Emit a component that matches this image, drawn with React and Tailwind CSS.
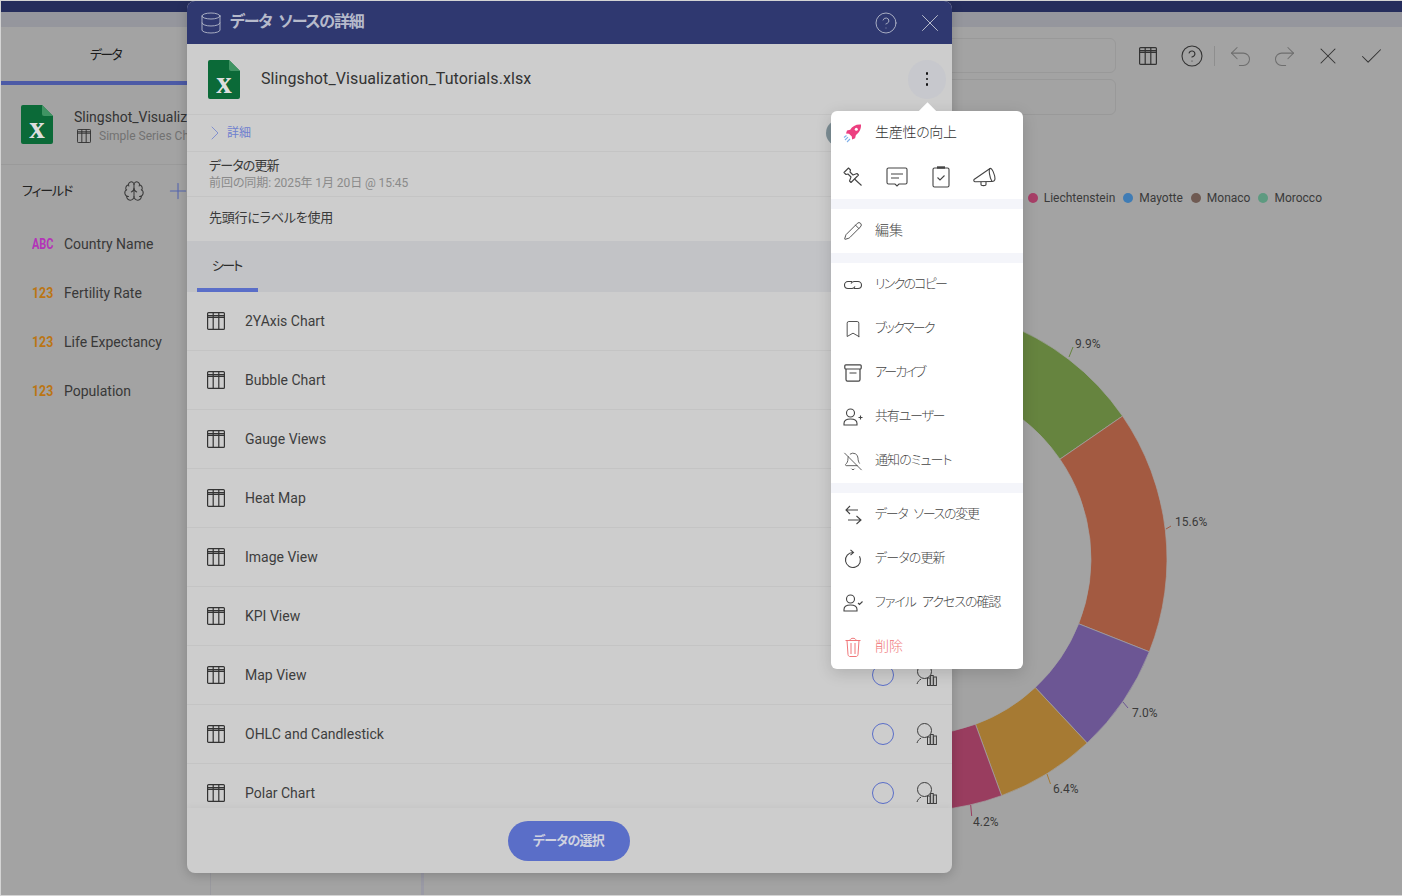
import React from "react";
import { Brain, Plus, ChevronRight, Database, X, Check, Undo2, Redo2, CircleHelp, Pencil, Bookmark, BellOff } from "lucide-react";

function TableIcon({ className = "" }) {
  return (
    <svg viewBox="0 0 18 18" className={className} fill="none" stroke="currentColor" strokeWidth="1.2">
      <rect x="0.6" y="0.6" width="16.8" height="16.8" rx="1" />
      <path d="M0.6 3.6H17.4M0.6 5.4H17.4M6.2 0.6V17.4M11.8 0.6V17.4" />
    </svg>
  );
}

function ExcelIcon({ className = "" }) {
  return (
    <svg viewBox="0 0 32 39" className={className}>
      <path d="M2 0H21L32 11V37a2 2 0 0 1-2 2H2a2 2 0 0 1-2-2V2a2 2 0 0 1 2-2Z" fill="#0b6a38" />
      <path d="M21 0L32 11H23a2 2 0 0 1-2-2Z" fill="#3f9463" />
      <text x="16" y="32.500" textAnchor="middle" fontFamily="'Liberation Serif',serif" fontWeight="700" fontSize="31" fill="#dedede">x</text>
    </svg>
  );
}

function SearchChart() {
  return (
    <svg viewBox="0 0 22 22" className="w-[22px] h-[22px] text-[#3d3d3d]" fill="none" stroke="currentColor" strokeWidth="1">
      <circle cx="8.5" cy="7.5" r="7" />
      <path d="M1 20c.6-2.2 2-3.8 4-4.8M12 15.5l1.5.8" />
      <rect x="11.5" y="14" width="2.6" height="7.5" fill="#cdcdcd" />
      <rect x="14.6" y="11.5" width="2.6" height="10" fill="#cdcdcd" />
      <rect x="17.6" y="13" width="2.8" height="8.5" fill="#cdcdcd" />
    </svg>
  );
}

const sheets = ["2YAxis Chart", "Bubble Chart", "Gauge Views", "Heat Map", "Image View", "KPI View", "Map View", "OHLC and Candlestick", "Polar Chart"];
const fields = [
  ["ABC", "Country Name", "text-[#b334b8] scale-x-[0.78]"],
  ["123", "Fertility Rate", "text-[#bb7514] scale-x-[0.88]"],
  ["123", "Life Expectancy", "text-[#bb7514] scale-x-[0.88]"],
  ["123", "Population", "text-[#bb7514] scale-x-[0.88]"],
];
const legend = [
  ["Liechtenstein", "bg-[#a83f68]"],
  ["Mayotte", "bg-[#3f7cb5]"],
  ["Monaco", "bg-[#6f5a52]"],
  ["Morocco", "bg-[#5d9a80]"],
];

const CX = 915, CY = 559, R1 = 252, R0 = 176;
function pt(r, a) {
  const t = (a * Math.PI) / 180;
  return [CX + r * Math.sin(t), CY - r * Math.cos(t)];
}
function wedge(a, b) {
  const [x1, y1] = pt(R1, a), [x2, y2] = pt(R1, b), [x3, y3] = pt(R0, b), [x4, y4] = pt(R0, a);
  return `M${x1} ${y1}A${R1} ${R1} 0 0 1 ${x2} ${y2}L${x3} ${y3}A${R0} ${R0} 0 0 0 ${x4} ${y4}Z`;
}
const wedges = [
  [19.8, 55.45, "#66843f"],
  [55.45, 111.6, "#a35a41"],
  [111.6, 136.9, "#6c5694"],
  [136.9, 159.9, "#a67a33"],
  [159.9, 175, "#993d5f"],
];
const labels = [
  ["9.9%", 1075, 348, "#66843f", "M1069 357L1073 347"],
  ["15.6%", 1175, 526, "#a35a41", "M1166 529L1171 526"],
  ["7.0%", 1132, 717, "#6c5694", "M1123 702L1128 708"],
  ["6.4%", 1053, 793, "#a67a33", "M1047 774L1050.5 784"],
  ["4.2%", 973, 826, "#993d5f", "M970.7 805L971.7 816"],
];

function Item({ icon, children, tone = "text-[#454545]", track = "text-[14px]" }) {
  return (
    <div className="h-[44px] flex items-center pl-[12px]">
      <span className="w-[20px] h-[20px] flex items-center justify-center shrink-0 text-[#444]">{icon}</span>
      <span className={`ml-[12px] -mt-[2px] font-light ${track} ${tone}`}>{children}</span>
    </div>
  );
}
const Sep = () => <div className="h-[10px] bg-[#f4f5fa]" />;

export default function App() {
  return (
    <div className="relative w-[1402px] h-[896px] overflow-hidden bg-[#a3a3a3] border-t border-b border-l border-[#d4d4d4] font-[Roboto,'Noto_Sans_CJK_JP',sans-serif] [font-feature-settings:'palt'] text-[#3a3a3a]">
      {/* background application */}
      <div className="h-[11px] bg-[#252d5c]" />
      <div className="h-[15px] bg-[#95969d]" />
      <div className="flex h-[868px] bg-[#a3a3a3] rounded-tl-[8px]">
        <div className="w-[210px] shrink-0 border-r border-[#99999e]">
          <div className="h-[54px] pt-[2px] flex items-center justify-center text-[13px] tracking-[-1.7px] text-[#1c1c1c]">データ</div>
          <div className="h-[4px] bg-[#4c5aa6]" />
          <div className="h-[80px] border-b border-[#9a9a9a] flex items-center pl-[20px]">
            <ExcelIcon className="w-[32px] h-[39px] shrink-0" />
            <div className="ml-[21px] pt-[4px] whitespace-nowrap">
              <div className="text-[14px] leading-[18px] text-[#333]">Slingshot_Visualization_Tutorials.xlsx</div>
              <div className="flex items-center mt-[1px]">
                <TableIcon className="w-[14px] h-[14px] ml-[3px] text-[#2f2f2f]" />
                <span className="ml-[8px] text-[12px] text-[#727272]">Simple Series Chart</span>
              </div>
            </div>
          </div>
          <div className="h-[50px] pt-[2px] flex items-center pl-[21px]">
            <span className="w-[54px] text-[13px] tracking-[-1.15px] text-[#222]">フィールド</span>
            <Brain className="ml-[47px] w-[22px] h-[22px] text-[#3a3a3a]" strokeWidth={1.1} />
            <Plus className="ml-[20px] w-[26px] h-[26px] text-[#5566b0]" strokeWidth={1} />
          </div>
          <div className="pt-[5px]">
            {fields.map(([t, n, c]) => (
              <div key={n} className="h-[49px] flex items-center pl-[31px]">
                <span className={`w-[32px] text-[14px] font-bold inline-block origin-left ${c}`}>{t}</span>
                <span className="text-[14px] text-[#383838]">{n}</span>
              </div>
            ))}
          </div>
        </div>
        <div className="w-[213px] shrink-0 border-r-[3px] border-[#9a9aa5]" />
        <div className="flex-1 flex flex-col min-w-0">
          <div className="flex pt-[11px]">
            <div className="w-[692px] shrink-0 flex flex-col gap-[6px]">
              <div className="h-[35px] rounded-[6px] border border-[#999]" />
              <div className="h-[36px] rounded-[6px] border border-[#999]" />
            </div>
            <div className="flex items-center h-[24px] mt-[6px] ml-[23px] text-[#333]">
              <TableIcon className="w-[18px] h-[18px]" />
              <CircleHelp className="ml-[23px] w-[24px] h-[24px]" strokeWidth={1.1} />
              <div className="ml-[10px] w-px h-[20px] bg-[#8e8e8e]" />
              <Undo2 className="ml-[12px] w-[27px] h-[27px] text-[#6e6e6e]" strokeWidth={0.9} />
              <Redo2 className="ml-[17px] w-[27px] h-[27px] text-[#6e6e6e]" strokeWidth={0.9} />
              <X className="ml-[16px] w-[28px] h-[28px]" strokeWidth={0.9} />
              <Check className="ml-[16px] w-[27px] h-[27px]" strokeWidth={0.9} />
            </div>
          </div>
          <div className="mt-[75px] h-[16px] flex justify-end gap-[8px] pr-[80px]">
            {legend.map(([n, c]) => (
              <div key={n} className="flex items-center gap-[6px]">
                <span className={`w-[10px] h-[10px] rounded-full ${c}`} />
                <span className="text-[12px] text-[#3a3a3a]">{n}</span>
              </div>
            ))}
          </div>
          <svg viewBox="424 210 978 685" className="block w-[978px] h-[685px] mt-[4px]">
            {wedges.map(([a, b, c]) => (
              <path key={a} d={wedge(a, b)} fill={c} stroke="#a3a3a3" strokeWidth="0.7" />
            ))}
            {labels.map(([t, x, y, c, d]) => (
              <g key={t}>
                <path d={d} stroke={c} strokeWidth="1" fill="none" />
                <text x={x} y={y} fontSize="12" fill="#3a3a3a">{t}</text>
              </g>
            ))}
          </svg>
        </div>
      </div>

      {/* data source details modal */}
      <div className="absolute left-[186px] top-0 w-[765px] h-[872px] rounded-[8px] bg-[#cdcdcd] flex flex-col overflow-hidden shadow-[0_2px_12px_rgba(0,0,0,0.2)]">
        <div className="h-[43px] shrink-0 bg-[#2f3870] flex items-center pl-[12px] text-[#b6bacb]">
          <Database className="w-[24px] h-[24px]" strokeWidth={0.9} />
          <span className="ml-[7px] -mt-[2px] text-[16px] font-bold tracking-[-1.15px] [word-spacing:4px]">データ ソースの詳細</span>
          <CircleHelp className="ml-auto w-[24px] h-[24px]" strokeWidth={0.9} />
          <X className="ml-[17px] mr-[7px] w-[30px] h-[30px]" strokeWidth={0.8} />
        </div>
        <div className="h-[71px] shrink-0 border-b border-[#c4c4c4] flex items-center pl-[21px]">
          <ExcelIcon className="w-[32px] h-[39px]" />
          <span className="ml-[21px] text-[16px] tracking-[0.1px] text-[#333]">Slingshot_Visualization_Tutorials.xlsx</span>
          <div className="ml-auto mr-[6px] w-[38px] h-[39px] rounded-full bg-[#c7c8cd] flex flex-col items-center justify-center gap-[3px]">
            <span className="w-[2.5px] h-[2.5px] rounded-full bg-[#111]" />
            <span className="w-[2.5px] h-[2.5px] rounded-full bg-[#111]" />
            <span className="w-[2.5px] h-[2.5px] rounded-full bg-[#111]" />
          </div>
        </div>
        <div className="h-[37px] shrink-0 border-b border-[#c4c4c4] flex items-center pl-[16px] text-[#6f80cf] relative">
          <ChevronRight className="w-[24px] h-[24px]" strokeWidth={0.8} />
          <span className="text-[12px]">詳細</span>
          <span className="absolute left-[639px] top-[5px] w-[26px] h-[26px] rounded-full bg-[#7c8d94]" />
        </div>
        <div className="h-[45px] shrink-0 border-b border-[#c4c4c4] pl-[22px] pt-[5px]">
          <div className="text-[13px] leading-[17px] tracking-[-0.85px] text-[#3a3a3a]">データの更新</div>
          <div className="mt-[2px] text-[12px] leading-[15px] tracking-[-0.08px] text-[#8a8a8a]">前回の同期: 2025年 1月 20日 @ 15:45</div>
        </div>
        <div className="h-[44px] shrink-0 flex items-center pl-[22px] pb-[2px] text-[13px] tracking-[-0.2px] text-[#3a3a3a]">先頭行にラベルを使用</div>
        <div className="h-[51px] shrink-0 bg-[#c2c3c6] flex items-stretch pl-[10px]">
          <div className="w-[61px] border-b-[4px] border-[#5a6ec8] flex items-center pl-[15px] pt-[3px] text-[13px] tracking-[-1.8px] text-[#2c2c2c]">シート</div>
        </div>
        <div className="flex-1 min-h-0 overflow-hidden">
          {sheets.map((s) => (
            <div key={s} className="h-[59px] border-b border-[#c4c4c4] flex items-center pl-[20px] pr-[14px]">
              <TableIcon className="w-[18px] h-[18px] text-[#333]" />
              <span className="ml-[20px] text-[14px] text-[#3d3d3d]">{s}</span>
              <span className="ml-auto w-[22px] h-[22px] rounded-full border border-[#5a6ec8]" />
              <span className="ml-[22px]"><SearchChart /></span>
            </div>
          ))}
        </div>
        <div className="h-[65px] shrink-0 flex justify-center pt-[13px] pr-[2px] shadow-[0_-2px_6px_rgba(0,0,0,0.03)]">
          <div className="w-[122px] h-[40px] rounded-full bg-[#5a6ec8] flex items-center justify-center text-[13px] font-bold tracking-[-0.7px] text-[#cfd2e0]">データの選択</div>
        </div>
      </div>

      {/* context menu */}
      <div className="absolute left-[830px] top-[110px] w-[192px] h-[558px] rounded-[6px] bg-white shadow-[0_4px_16px_rgba(0,0,0,0.15)]">
        <div className="absolute left-[90px] -top-[6px] w-[13px] h-[13px] rotate-45 bg-white" />
        <div className="relative">
          <Item
            track="text-[14px] tracking-[-0.3px]"
            tone="text-[#333]"
            icon={
              <svg viewBox="0 0 20 20" className="w-[20px] h-[20px]">
                <path d="M18 1.5c-5-.4-8.6 1.6-10.8 5.2L4 7.500 3 10.500l3 .3 2.800 2.700.3 3 3-1.200.8-3.200C15.600 10 18.400 6.500 18 1.500Z" fill="#ec3f80" />
                <circle cx="13.300" cy="6.200" r="1.500" fill="#fff" />
                <path d="M2 17l3-2.800M4 19l3-3M1 14.500l2.500-2" stroke="#7fb0ea" strokeWidth="1.100" fill="none" />
              </svg>
            }
          >
            生産性の向上
          </Item>
          <div className="h-[44px] flex items-center pl-[12px] text-[#444]">
            <span className="w-[20px] flex justify-center">
              <svg viewBox="0 0 20 20" className="w-[20px] h-[20px]" fill="none" stroke="currentColor" strokeWidth="1.100" strokeLinejoin="round">
                <path d="M5.500 1L1 5.500l2 2 2-.5 3 3-1.500 4L8 15.500 15.500 8 14 6.500l-4 1.500-3-3 .5-2Z" />
                <path d="M11.500 12l7 6.500" />
              </svg>
            </span>
            <span className="ml-[22px] w-[24px] flex justify-center">
              <svg viewBox="0 0 22 20" className="w-[22px] h-[20px]" fill="none" stroke="currentColor" strokeWidth="1.100">
                <path d="M2.500 1h17A1.500 1.500 0 0 1 21 2.500v13a1.500 1.500 0 0 1-1.500 1.500H13l-2 2-2-2H2.500A1.500 1.500 0 0 1 1 15.500v-13A1.500 1.500 0 0 1 2.500 1Z" />
                <path d="M5 7h12M5 11h8" />
              </svg>
            </span>
            <span className="ml-[22px] w-[20px] flex justify-center">
              <svg viewBox="0 0 18 22" className="w-[18px] h-[22px]" fill="none" stroke="currentColor" strokeWidth="1.100">
                <rect x="1" y="2" width="16" height="19" rx="1.500" />
                <path d="M5 1.500h8" strokeWidth="2.400" />
                <path d="M5.500 11.500l2.500 2.500 4.500-4.500" />
              </svg>
            </span>
            <span className="ml-[22px] w-[24px] flex justify-center">
              <svg viewBox="0 0 24 20" className="w-[24px] h-[20px]" fill="none" stroke="currentColor" strokeWidth="1.100">
                <path d="M1 12.500L17 1.500c2-1 5 6.500 5 10.500-.3 2.400-2 2.500-3 2.500L2 14.800c-1 0-1.500-1.300-1-2.300Z" />
                <path d="M17 1.500c-1.500 1-.5 9 2 13" />
                <path d="M8 15v2.500c0 1.500 5 1.500 5 0V15" />
              </svg>
            </span>
          </div>
          <Sep />
          <Item icon={<Pencil className="w-[20px] h-[20px]" strokeWidth={1.100} />}>編集</Item>
          <Sep />
          <Item
            track="text-[13px] tracking-[-1.8px]"
            icon={
              <svg viewBox="0 0 20 10" className="w-[20px] h-[10px]" fill="none" stroke="currentColor" strokeWidth="1.100">
                <path d="M9 1.500H5a3.500 3.500 0 0 0 0 7h4a3.500 3.500 0 0 0 3-2" />
                <path d="M11 8.500h4a3.500 3.500 0 0 0 0-7h-4a3.500 3.500 0 0 0-3 2" />
              </svg>
            }
          >
            リンクのコピー
          </Item>
          <Item track="text-[13px] tracking-[-1.75px]" icon={<Bookmark className="w-[20px] h-[20px]" strokeWidth={1.100} />}>ブックマーク</Item>
          <Item
            track="text-[13px] tracking-[-1.9px]"
            icon={
              <svg viewBox="0 0 18 18" className="w-[18px] h-[18px]" fill="none" stroke="currentColor" strokeWidth="1.200">
                <rect x="0.800" y="0.800" width="16.400" height="4.200" rx="1" />
                <path d="M2 5v10.500c0 1 .7 1.700 1.500 1.700h11c.8 0 1.500-.7 1.500-1.700V5M5.500 9h7" />
              </svg>
            }
          >
            アーカイブ
          </Item>
          <Item
            track="text-[13px] tracking-[-1.2px]"
            icon={
              <svg viewBox="0 0 20 18" className="w-[20px] h-[18px]" fill="none" stroke="currentColor" strokeWidth="1.100">
                <circle cx="7.500" cy="5" r="4" />
                <path d="M1 17v-1.500C1 12.500 3.500 11 7.500 11s6.500 1.500 6.500 4.500V17ZM15.500 9.500h4M17.500 7.500v4" />
              </svg>
            }
          >
            共有ユーザー
          </Item>
          <Item track="text-[13px] tracking-[-0.95px]" icon={<BellOff className="w-[21px] h-[21px]" strokeWidth={1} />}>通知のミュート</Item>
          <Sep />
          <Item
            track="text-[13px] tracking-[-1.3px] [word-spacing:4px]"
            icon={
              <svg viewBox="0 0 18 20" className="w-[18px] h-[20px]" fill="none" stroke="currentColor" strokeWidth="1.100">
                <path d="M14 5H2M6 1L2 5l4 4M4 15h13M12.500 11l4.500 4-4.500 4" />
              </svg>
            }
          >
            データ ソースの変更
          </Item>
          <Item
            track="text-[13px] tracking-[-0.85px]"
            icon={
              <svg viewBox="0 0 20 20" className="w-[20px] h-[20px]" fill="none" stroke="currentColor" strokeWidth="1.100">
                <path d="M10 3.500A7.500 7.500 0 1 0 16.500 7.300" />
                <path d="M7.500 .8L10.500 3.500 7.500 6.200" />
              </svg>
            }
          >
            データの更新
          </Item>
          <Item
            track="text-[13px] tracking-[-1.05px] [word-spacing:4px]"
            icon={
              <svg viewBox="0 0 20 18" className="w-[20px] h-[18px]" fill="none" stroke="currentColor" strokeWidth="1.100">
                <circle cx="7.500" cy="5" r="4" />
                <path d="M1 17v-1.500C1 12.500 3.500 11 7.500 11s6.500 1.500 6.500 4.500V17ZM15 9l1.500 1.500 3-3" />
              </svg>
            }
          >
            ファイル アクセスの確認
          </Item>
          <Item
            tone="text-[#f0777a]"
            icon={
              <svg viewBox="0 0 16 20" className="w-[16px] h-[20px] text-[#f0777a]" fill="none" stroke="currentColor" strokeWidth="1">
                <path d="M.5 3.500h15M5 3.500c0-3 6-3 6 0M2 3.500l1 14c.1 1 .8 2 1.800 2h6.400c1 0 1.700-1 1.800-2l1-14M6 6v11M10 6v11" />
              </svg>
            }
          >
            削除
          </Item>
        </div>
      </div>
    </div>
  );
}
